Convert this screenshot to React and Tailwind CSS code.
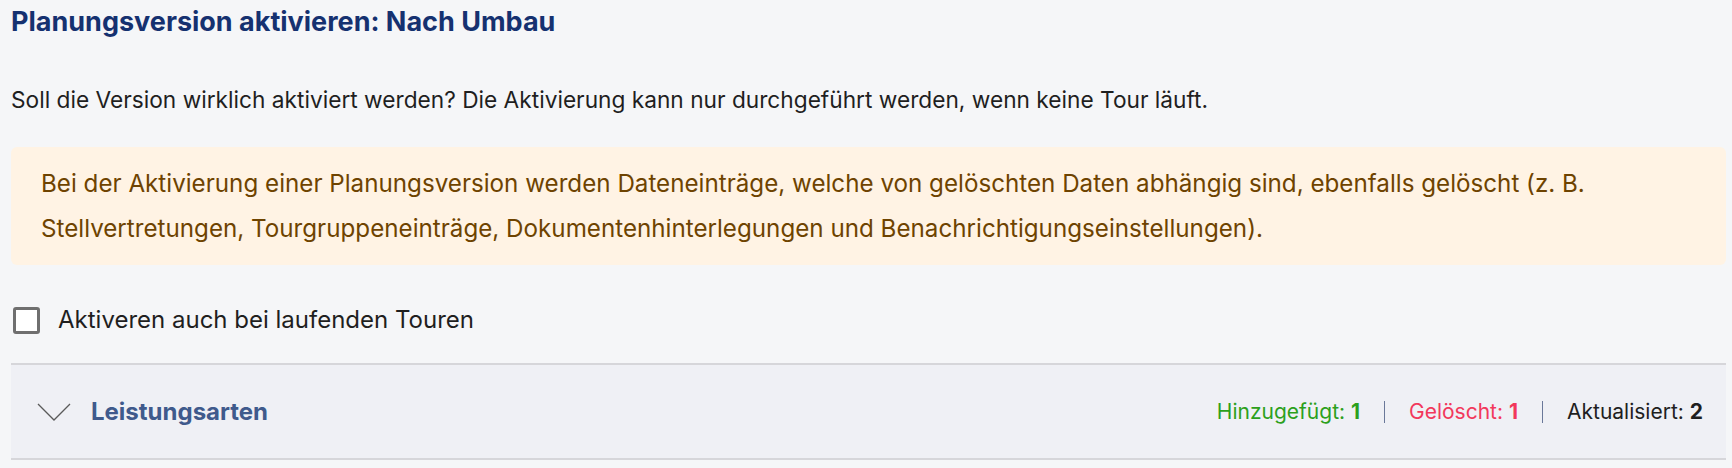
import { Check } from "lucide-react";

const STATS = [
  { label: "Hinzugefügt:", value: 1, color: "text-[#2ca01c]" },
  { label: "Gelöscht:", value: 1, color: "text-[#f2385c]" },
  { label: "Aktualisiert:", value: 2, color: "text-[#1f1f1f]" },
];

function Chevron() {
  return (
    <svg width="34" height="18" viewBox="0 0 34 18" className="shrink-0">
      <path d="M1 1 L17 17 L33 1" fill="none" stroke="#5a5a5a" strokeWidth="1.3" />
    </svg>
  );
}

export default function App() {
  return (
    <div
      className="w-full h-[468px] overflow-hidden bg-[#f5f6f8] pl-[11px] pr-[6px] pt-[7px]"
      style={{ fontFamily: "Inter, 'Noto Sans', sans-serif" }}
    >
      {/* Header */}
      <h1 className="text-[27px] leading-[30px] font-bold text-[#153170]">
        Planungsversion aktivieren: Nach Umbau
      </h1>

      <p className="mt-[48px] text-[22.7px] leading-[30px] text-[#1f1f1f]">
        Soll die Version wirklich aktiviert werden? Die Aktivierung kann nur durchgeführt werden, wenn keine Tour läuft.
      </p>

      {/* Warning */}
      <div className="mt-[32px] rounded-[6px] bg-[#fff3e4] px-[30px] py-[14px] text-[24.2px] leading-[45px] text-[#6e4300]">
        Bei der Aktivierung einer Planungsversion werden Dateneinträge, welche von gelöschten Daten abhängig sind, ebenfalls gelöscht (z. B.
        <br />
        Stellvertretungen, Tourgruppeneinträge, Dokumentenhinterlegungen und Benachrichtigungseinstellungen).
      </div>

      {/* Checkbox */}
      <label className="mt-[41px] flex items-center gap-[18px] cursor-pointer">
        <span className="ml-[2px] w-[27px] h-[27px] rounded-[3px] border-[3px] border-[#6f6f6f] bg-white flex items-center justify-center">
          <Check size={16} className="hidden" />
        </span>
        <span className="text-[24px] leading-[28px] text-[#1f1f1f]">Aktiveren auch bei laufenden Touren</span>
      </label>

      {/* Accordion */}
      <div className="mt-[29px] border-y-2 border-[#d6d6da] bg-[#eff0f5] h-[97px] flex items-center pl-[26px] pr-[23px]">
        <Chevron />
        <span className="ml-[20px] text-[24px] font-bold text-[#3f5a8c]">Leistungsarten</span>
        <div className="ml-auto flex items-center text-[21px]">
          {STATS.map((s, i) => (
            <div key={s.label} className="flex items-center">
              {i > 0 && <span className="mx-[24px] w-px h-[22px] bg-[#6a7899]" />}
              <span className={s.color}>
                {s.label} <span className="font-bold">{s.value}</span>
              </span>
            </div>
          ))}
        </div>
      </div>
    </div>
  );
}
